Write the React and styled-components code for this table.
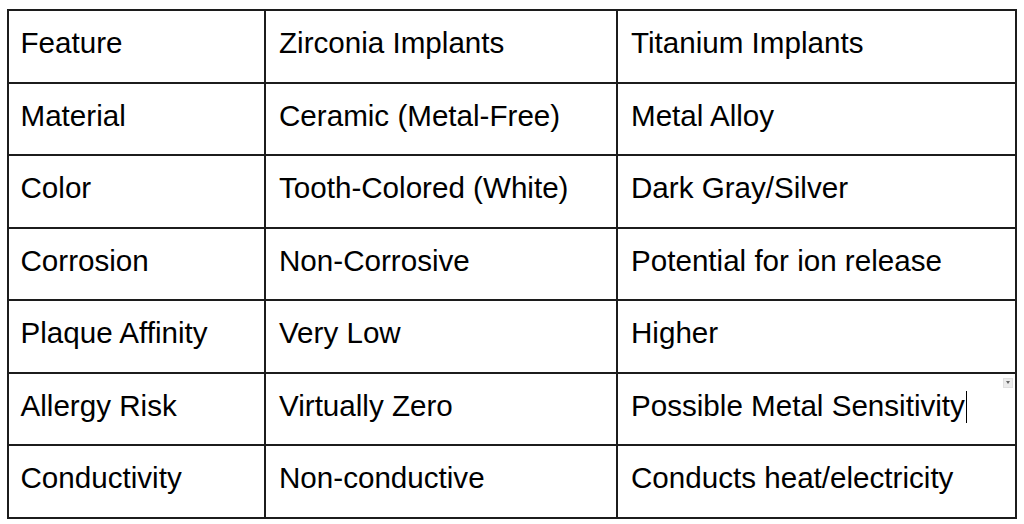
import styled, { createGlobalStyle } from "styled-components";

const GlobalStyle = createGlobalStyle`
  html, body {
    margin: 0;
    padding: 0;
    background: #ffffff;
  }
  body {
    font-family: "Liberation Sans", Arial, Helvetica, sans-serif;
    color: #000;
  }
`;

const SPage = styled.div`
  padding: 9px 7px;
`;

// grade da tabela: bordas superior/esquerda no container, o resto nas celulas
const SGrid = styled.div`
  display: grid;
  grid-template-columns: 257px 352px 399px;
  grid-template-rows: repeat(7, 72.5px);
  width: 1010px;
  border-top: 2px solid #1c1c1c;
  border-left: 2px solid #1c1c1c;
  box-sizing: border-box;
`;

const SCell = styled.div`
  position: relative;
  box-sizing: border-box;
  border-right: 2px solid #1c1c1c;
  border-bottom: 2px solid #1c1c1c;
  padding: 17px 0 0 ${(p) => (p.$first ? "11.5px" : "13px")};
  font-size: 29.6px;
  line-height: 1;
  white-space: nowrap;
`;

const SCaret = styled.span`
  display: inline-block;
  width: 1.5px;
  height: 32px;
  margin-left: 1px;
  background: #000;
  vertical-align: -7px;
`;

const SDropdown = styled.span`
  position: absolute;
  top: 4px;
  right: 2px;
  width: 10px;
  height: 10px;
  background: #ececec;
  border: 1px solid #e0e0e0;
  box-sizing: border-box;
  display: flex;
  align-items: center;
  justify-content: center;

  &::after {
    content: "";
    border-left: 2.5px solid transparent;
    border-right: 2.5px solid transparent;
    border-top: 3px solid #666;
  }
`;

const rows = [
  ["Feature", "Zirconia Implants", "Titanium Implants"],
  ["Material", "Ceramic (Metal-Free)", "Metal Alloy"],
  ["Color", "Tooth-Colored (White)", "Dark Gray/Silver"],
  ["Corrosion", "Non-Corrosive", "Potential for ion release"],
  ["Plaque Affinity", "Very Low", "Higher"],
  ["Allergy Risk", "Virtually Zero", "Possible Metal Sensitivity"],
  ["Conductivity", "Non-conductive", "Conducts heat/electricity"],
];

function App() {
  return (
    <SPage>
      <GlobalStyle />
      <SGrid>
        {rows.map((row, r) =>
          row.map((text, c) => {
            const editing = r === 5 && c === 2;
            return (
              <SCell key={`${r}-${c}`} $first={c === 0}>
                {text}
                {editing && <SCaret />}
                {editing && <SDropdown />}
              </SCell>
            );
          })
        )}
      </SGrid>
    </SPage>
  );
}

export default App;
